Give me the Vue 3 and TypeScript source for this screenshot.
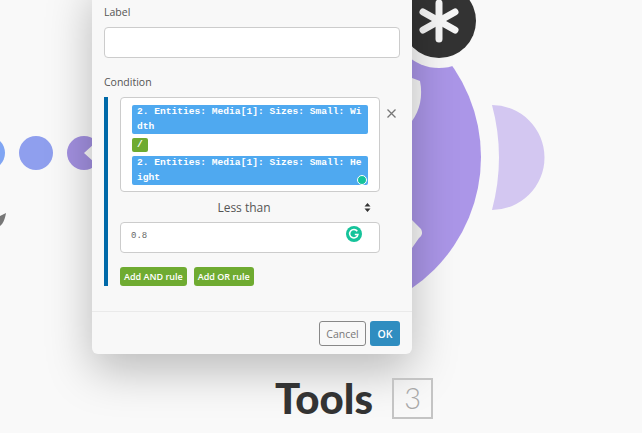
<script setup lang="ts">
const tagFirst = '2. Entities: Media[1]: Sizes: Small: Width'
const tagSecond = '2. Entities: Media[1]: Sizes: Small: Height'
</script>

<template>
  <div class="stage">
    <svg class="canvas" width="642" height="433" viewBox="0 0 642 433">
      <circle cx="-12" cy="153" r="17" fill="#80a5f3" />
      <circle cx="36" cy="153" r="17" fill="#8f9fee" />
      <circle cx="84" cy="153" r="17" fill="#a290e0" />
      <path d="M84 153 L94 144 V162 Z" fill="#f9f9f9" />
      <path d="M0 226 C3 224 5 219 6 213 L0 216 Z" fill="#777" />
      <circle cx="322" cy="157" r="159" fill="#ab96e8" />
      <path d="M412 78 L420 81 C423 96 420 110 412 121 Z" fill="#f9f9f9" />
      <path d="M412 220 L421 229 C423 233 422 236 419 238 L412 248 Z" fill="#f9f9f9" />
      <path d="M492 105 A52.5 52.5 0 0 1 492 210 Q506 157 492 105 Z" fill="#d3c7f1" />
      <circle cx="439" cy="21" r="47" fill="#f9f9f9" />
      <circle cx="439" cy="21" r="37" fill="#333" />
      <g stroke="#f6f6f6" stroke-width="7" stroke-linecap="round">
        <path d="M439 3 V39" />
        <path d="M423 12 L455 30" />
        <path d="M455 12 L423 30" />
      </g>
    </svg>

    <section class="modal">
      <div class="body">
        <label class="caption first">Label</label>
        <div class="field"></div>
        <label class="caption second">Condition</label>
        <div class="rule">
          <div class="rule-row">
            <div class="expr">
              <div class="tag">{{ tagFirst }}</div>
              <div class="op">/</div>
              <div class="tag">{{ tagSecond }}</div>
              <span class="dot"></span>
            </div>
            <svg class="close" width="11" height="11" viewBox="0 0 11 11">
              <path d="M1.5 1.5 L9.5 9.5 M9.5 1.5 L1.5 9.5" stroke="#777" stroke-width="1.3" />
            </svg>
          </div>
          <div class="select">
            <span>Less than</span>
            <svg class="sort" width="7" height="9" viewBox="0 0 7 9">
              <path d="M3.5 0 L6.5 3.6 H0.5 Z M3.5 9 L0.5 5.4 H6.5 Z" fill="#333" />
            </svg>
          </div>
          <div class="value">
            <span>0.8</span>
            <svg class="grammarly" width="16" height="16" viewBox="0 0 16 16">
              <circle cx="8" cy="8" r="8" fill="#15c39a" />
              <path d="M11.3 5.3 A4.2 4.2 0 1 0 12 8.4 H8.8" fill="none" stroke="#fff" stroke-width="1.5" />
            </svg>
          </div>
          <div class="actions">
            <button class="add">Add AND rule</button>
            <button class="add">Add OR rule</button>
          </div>
        </div>
      </div>
      <footer class="foot">
        <button class="cancel">Cancel</button>
        <button class="ok">OK</button>
      </footer>
    </section>

    <div class="title">
      <span class="name">Tools</span>
      <span class="count">3</span>
    </div>
  </div>
</template>

<style scoped>
.stage {
  position: relative;
  width: 642px;
  height: 433px;
  overflow: hidden;
  background: #f9f9f9;
  font-family: "Open Sans", sans-serif;
}
.canvas {
  position: absolute;
  left: 0;
  top: 0;
}
.modal {
  position: absolute;
  left: 92px;
  top: -20px;
  width: 320px;
  height: 374px;
  box-sizing: border-box;
  display: flex;
  flex-direction: column;
  background: #f8f8f8;
  border-radius: 0 0 6px 6px;
  box-shadow: 0 16px 46px rgba(0, 0, 0, 0.26);
}
.body {
  flex: 1;
  padding: 24px 12px 0;
}
.caption {
  display: block;
  font-size: 10.5px;
  line-height: 16px;
  color: #555;
}
.field {
  height: 31px;
  margin-top: 7px;
  box-sizing: border-box;
  background: #fff;
  border: 1px solid #ccc;
  border-radius: 4px;
}
.second {
  margin-top: 16px;
}
.rule {
  margin-top: 7px;
  height: 189px;
  box-sizing: border-box;
  border-left: 4px solid #0069a8;
  padding-left: 12px;
}
.rule-row {
  display: flex;
  align-items: flex-start;
}
.expr {
  position: relative;
  width: 260px;
  height: 95px;
  box-sizing: border-box;
  padding: 7px 11px;
  background: #fff;
  border: 1px solid #ccc;
  border-radius: 4px;
}
.tag {
  background: #4fa9f0;
  color: #fff;
  border-radius: 2px;
  padding: 0 4px 0 5px;
  height: 29px;
  font-family: "Liberation Mono", monospace;
  font-weight: 700;
  font-size: 9.6px;
  line-height: 14.5px;
  word-break: break-all;
}
.op {
  width: 16px;
  height: 14px;
  margin: 4px 0;
  box-sizing: border-box;
  padding-left: 5px;
  background: #6fab31;
  color: #fff;
  border-radius: 2px;
  font-family: "Liberation Mono", monospace;
  font-weight: 700;
  font-size: 9.6px;
  line-height: 14px;
}
.dot {
  position: absolute;
  right: 12px;
  top: 77px;
  width: 10px;
  height: 10px;
  box-sizing: border-box;
  border-radius: 50%;
  background: #15c39a;
  border: 1.5px solid #fff;
}
.close {
  margin: 11px 0 0 6px;
}
.select {
  position: relative;
  width: 248px;
  height: 30px;
  box-sizing: border-box;
  padding-top: 6px;
  text-align: center;
  font-size: 12px;
  line-height: 20px;
  color: #555;
}
.sort {
  position: absolute;
  right: -3px;
  top: 11px;
}
.value {
  position: relative;
  width: 260px;
  height: 31px;
  box-sizing: border-box;
  padding: 6px 10px;
  background: #fff;
  border: 1px solid #ccc;
  border-radius: 4px;
  font-family: "Liberation Mono", monospace;
  font-size: 9px;
  line-height: 14px;
  color: #666;
}
.grammarly {
  position: absolute;
  right: 17px;
  top: 3px;
}
.actions {
  display: flex;
  gap: 7px;
  margin-top: 14px;
}
.add {
  height: 19px;
  padding: 0 4px;
  border: 0;
  border-radius: 3px;
  background: #6fab31;
  color: #fff;
  font-family: "Open Sans", sans-serif;
  font-weight: 600;
  font-size: 9px;
  line-height: 19px;
}
.foot {
  height: 43px;
  box-sizing: border-box;
  padding: 9px 12px 0;
  border-top: 1px solid #eaeaea;
  display: flex;
  justify-content: flex-end;
  gap: 4px;
}
.cancel,
.ok {
  height: 25px;
  padding: 0;
  font-family: "Open Sans", sans-serif;
  font-size: 10.5px;
  border-radius: 3px;
}
.cancel {
  width: 47px;
  background: #f8f8f8;
  border: 1px solid #888;
  color: #777;
}
.ok {
  width: 30px;
  background: #2f8dc0;
  border: 0;
  color: #fff;
  font-weight: 600;
}
.title {
  position: absolute;
  left: 275px;
  top: 372px;
  display: flex;
  align-items: center;
  gap: 19px;
}
.name {
  font-family: Lato, sans-serif;
  font-weight: 900;
  font-size: 42px;
  line-height: 52px;
  color: #333;
}
.count {
  width: 41px;
  height: 41px;
  box-sizing: border-box;
  border: 2px solid #c4c4c4;
  text-align: center;
  font-family: Lato, sans-serif;
  font-size: 29px;
  line-height: 36px;
  color: #a8a8a8;
  font-weight: 300;
}
</style>
